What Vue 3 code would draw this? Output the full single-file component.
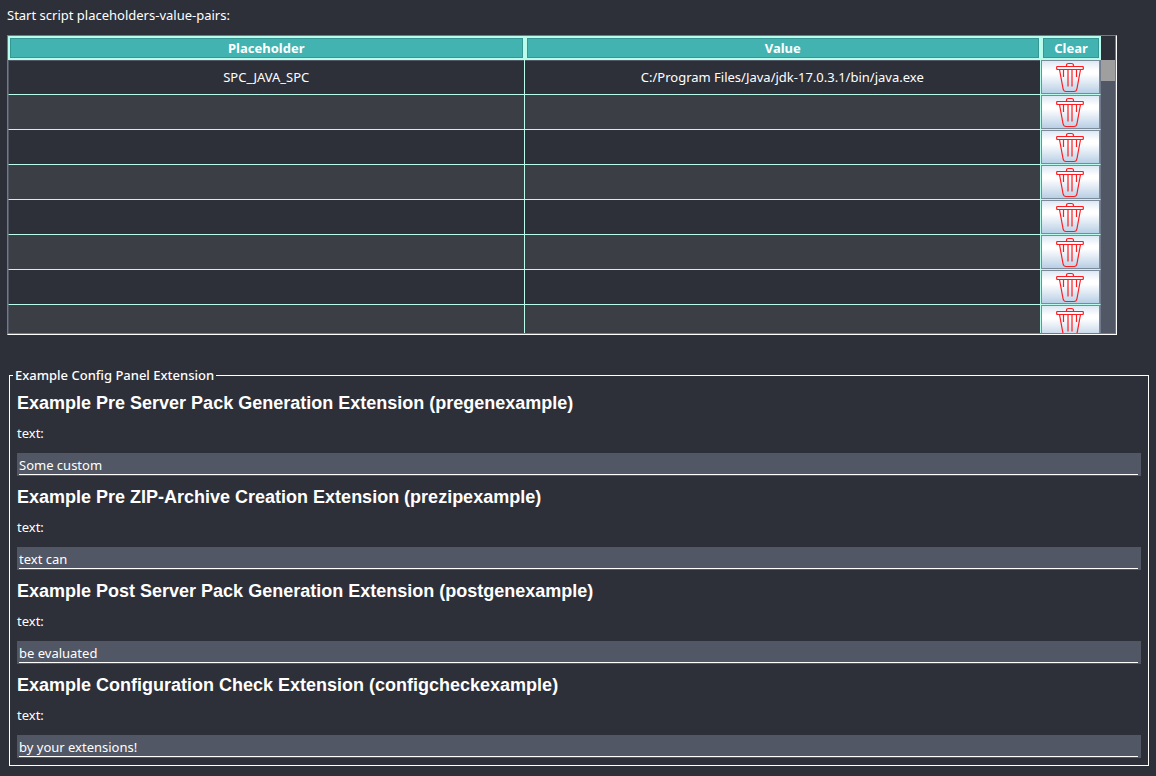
<script setup>
import { reactive } from 'vue'

const rows = reactive([
  { key: 'SPC_JAVA_SPC', value: 'C:/Program Files/Java/jdk-17.0.3.1/bin/java.exe' },
  ...Array.from({ length: 7 }, () => ({ key: '', value: '' })),
])

const extensions = reactive([
  { id: 'pregenexample', title: 'Example Pre Server Pack Generation Extension', text: 'Some custom' },
  { id: 'prezipexample', title: 'Example Pre ZIP-Archive Creation Extension', text: 'text can' },
  { id: 'postgenexample', title: 'Example Post Server Pack Generation Extension', text: 'be evaluated' },
  { id: 'configcheckexample', title: 'Example Configuration Check Extension', text: 'by your extensions!' },
])

function clearRow(row) {
  row.key = ''
  row.value = ''
}
</script>

<template>
  <main class="page">
    <p id="pairs-label" class="label">Start script placeholders-value-pairs:</p>

    <div class="pane">
      <div class="view">
        <table class="pairs" aria-labelledby="pairs-label">
          <colgroup>
            <col /><col /><col class="clear-col" />
          </colgroup>
          <thead>
            <tr><th>Placeholder</th><th>Value</th><th>Clear</th></tr>
          </thead>
          <tbody>
            <tr v-for="(row, i) in rows" :key="i">
              <td>{{ row.key }}</td>
              <td>{{ row.value }}</td>
              <td class="action">
                <button type="button" class="clear" aria-label="Clear row" @click="clearRow(row)">
                  <svg viewBox="1 0 29 32" width="29" height="32" aria-hidden="true">
                    <path d="M11.5 5.5V4.5Q11.5 2.500 13.500 2.500H16.500Q18.500 2.500 18.500 4.500V5.500" />
                    <rect x="1.700" y="5.500" width="26.600" height="3" rx="0.500" />
                    <path d="M4.500 8.500L8 27.500Q8.500 30.500 11 30.500H19Q21.500 30.500 22 27.500L25.500 8.500" />
                    <path d="M8.500 8.500V16M13 8.500V25.500M17 8.500V25.500M21.500 8.500V16" />
                  </svg>
                </button>
              </td>
            </tr>
          </tbody>
        </table>
        <div class="side"><div class="track"><div class="thumb"></div></div></div>
      </div>
    </div>

    <fieldset class="panel">
      <legend>Example Config Panel Extension</legend>
      <section v-for="ext in extensions" :key="ext.id">
        <h2>{{ ext.title }} ({{ ext.id }})</h2>
        <label :for="ext.id">text:</label>
        <div class="field"><input :id="ext.id" v-model="ext.text" type="text" /></div>
      </section>
    </fieldset>
  </main>
</template>

<style>
body {
  margin: 0;
  background: #2e3039;
}
</style>

<style scoped>
.page {
  padding: 5px 7px 10px;
  color: #fff;
  font: 13px/20px "Noto Sans", sans-serif;
}
.label {
  margin: 0 0 10px;
}
.pane {
  margin-right: 32px;
  border: 1px solid #6f7b8c;
  border-right-color: #fff;
  border-bottom-color: #fff;
}
.view {
  display: flex;
  height: 297px;
  overflow: hidden;
  border: 0 solid #6f7b8c;
  border-right-width: 1px;
  border-bottom-width: 1px;
}
.pairs {
  flex: 1;
  align-self: flex-start;
  table-layout: fixed;
  border-collapse: separate;
  border-spacing: 0;
  width: 100%;
}
.clear-col {
  width: 60px;
}
th {
  box-sizing: border-box;
  height: 24px;
  padding: 0;
  border: 2px solid #b9fceb;
  background: #42b3b1;
  box-shadow: inset 0 0 0 1px #369694;
  line-height: 18px;
}
td {
  box-sizing: border-box;
  height: 35px;
  padding: 0;
  border-right: 1px solid #b9fceb;
  border-bottom: 1px solid #b9fceb;
  text-align: center;
}
td:first-child {
  border-left: 1px solid #525765;
}
tbody tr:first-child td {
  box-shadow: inset 0 1px #525765;
}
tbody tr:nth-child(even) {
  background: #3c3e46;
}
td.action {
  border-right-color: #6f7b8c;
}
.clear {
  display: flex;
  align-items: center;
  justify-content: center;
  box-sizing: border-box;
  width: 100%;
  height: 34px;
  padding: 0;
  border: 1px solid #7a8a99;
  background: linear-gradient(#dde8f3, #fff 30%, #fff 40%, #b8cfe5);
}
.clear svg {
  fill: none;
  stroke: #ff1c20;
  stroke-width: 1.2;
}
.side {
  display: flex;
  width: 14px;
  padding-top: 24px;
}
.track {
  flex: 1;
  background: #525765;
}
.thumb {
  height: 21px;
  background: #9f9f9f;
}
.panel {
  margin: 30px 0 0 2px;
  padding: 5px 7px 7px;
  border: 1px solid #fff;
  min-width: 0;
}
legend {
  margin-left: -4px;
  padding: 0 2px;
  font-weight: 500;
}
h2 {
  margin: 0;
  font: bold 18px/26px "Liberation Sans", sans-serif;
}
label {
  display: block;
  padding: 7px 0 10px;
}
section + section {
  margin-top: 8px;
}
.field {
  padding: 0 3px 1px 2px;
  background: #525765;
}
input {
  display: block;
  box-sizing: border-box;
  width: 100%;
  height: 22px;
  padding: 2px 0 0;
  border: 0;
  border-bottom: 1px solid #fff;
  background: transparent;
  color: inherit;
  font: inherit;
  outline: 0;
}
</style>
